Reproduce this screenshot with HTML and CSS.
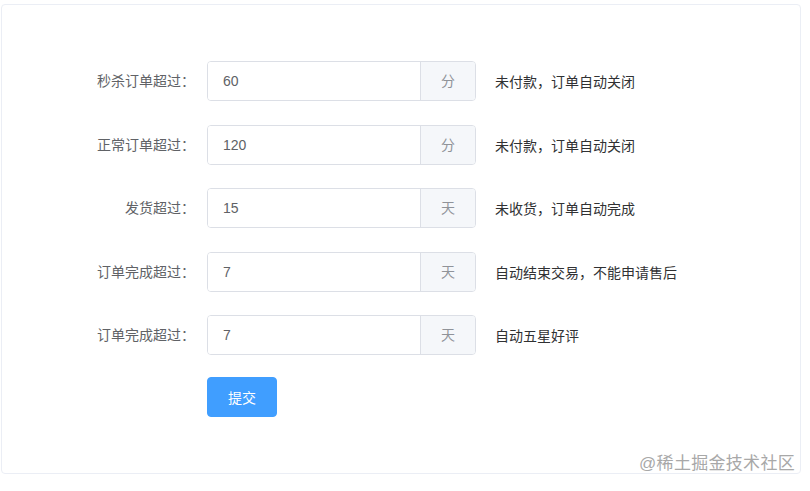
FILE: index.html
```html
<!DOCTYPE html>
<html lang="zh">
<head>
<meta charset="utf-8">
<link rel="stylesheet" href="styles.css">
</head>
<body>
<div class="card">
  <form class="form">
    <div class="row">
      <label class="label">秒杀订单超过：</label>
      <div class="group"><div class="input">60</div><div class="addon">分</div></div>
      <span class="tip">未付款，订单自动关闭</span>
    </div>
    <div class="row">
      <label class="label">正常订单超过：</label>
      <div class="group"><div class="input">120</div><div class="addon">分</div></div>
      <span class="tip">未付款，订单自动关闭</span>
    </div>
    <div class="row">
      <label class="label">发货超过：</label>
      <div class="group"><div class="input">15</div><div class="addon">天</div></div>
      <span class="tip">未收货，订单自动完成</span>
    </div>
    <div class="row">
      <label class="label">订单完成超过：</label>
      <div class="group"><div class="input">7</div><div class="addon">天</div></div>
      <span class="tip">自动结束交易，不能申请售后</span>
    </div>
    <div class="row last">
      <label class="label">订单完成超过：</label>
      <div class="group"><div class="input">7</div><div class="addon">天</div></div>
      <span class="tip">自动五星好评</span>
    </div>
    <div class="row btnrow">
      <span class="label"></span>
      <button type="button" class="btn">提交</button>
    </div>
  </form>
  <div class="watermark">@稀土掘金技术社区</div>
</div>
</body>
</html>
```

FILE: styles.css
```css
html, body {
  margin: 0;
  padding: 0;
  background: #fff;
  font-family: "Liberation Sans", "Noto Sans CJK SC", sans-serif;
  font-size: 14px;
}
body {
  padding: 4px 9px 0 1px;
}
.card {
  position: relative;
  box-sizing: border-box;
  width: 800px;
  height: 470px;
  border: 1px solid #ebeef5;
  border-radius: 4px;
  padding-top: 56px;
}
.form {
  padding-left: 85px;
}
.row {
  display: flex;
  align-items: center;
  height: 40px;
  margin-bottom: 23.5px;
}
.row.last {
  margin-bottom: 21.5px;
}
.label {
  box-sizing: border-box;
  width: 120px;
  padding-right: 12px;
  text-align: right;
  color: #606266;
  line-height: 40px;
  flex: none;
}
.group {
  display: flex;
  width: 269px;
  height: 40px;
  box-sizing: border-box;
  border: 1px solid #dcdfe6;
  border-radius: 4px;
  overflow: hidden;
  flex: none;
}
.input {
  flex: 1;
  padding-left: 15px;
  line-height: 38px;
  color: #606266;
  background: #fff;
}
.addon {
  width: 54px;
  border-left: 1px solid #dcdfe6;
  background: #f5f7fa;
  color: #909399;
  text-align: center;
  line-height: 38px;
}
.tip {
  margin-left: 19px;
  color: #303133;
  font-size: 14px;
}
.btn {
  width: 70px;
  height: 40px;
  border: 1px solid #409eff;
  border-radius: 4px;
  background: #409eff;
  color: #fff;
  font-family: inherit;
  font-size: 14px;
  padding: 0;
}
.watermark {
  position: absolute;
  right: 5px;
  bottom: -2px;
  font-size: 17px;
  color: #a8a8a8;
  letter-spacing: 0.3px;
  line-height: 22px;
}
```
